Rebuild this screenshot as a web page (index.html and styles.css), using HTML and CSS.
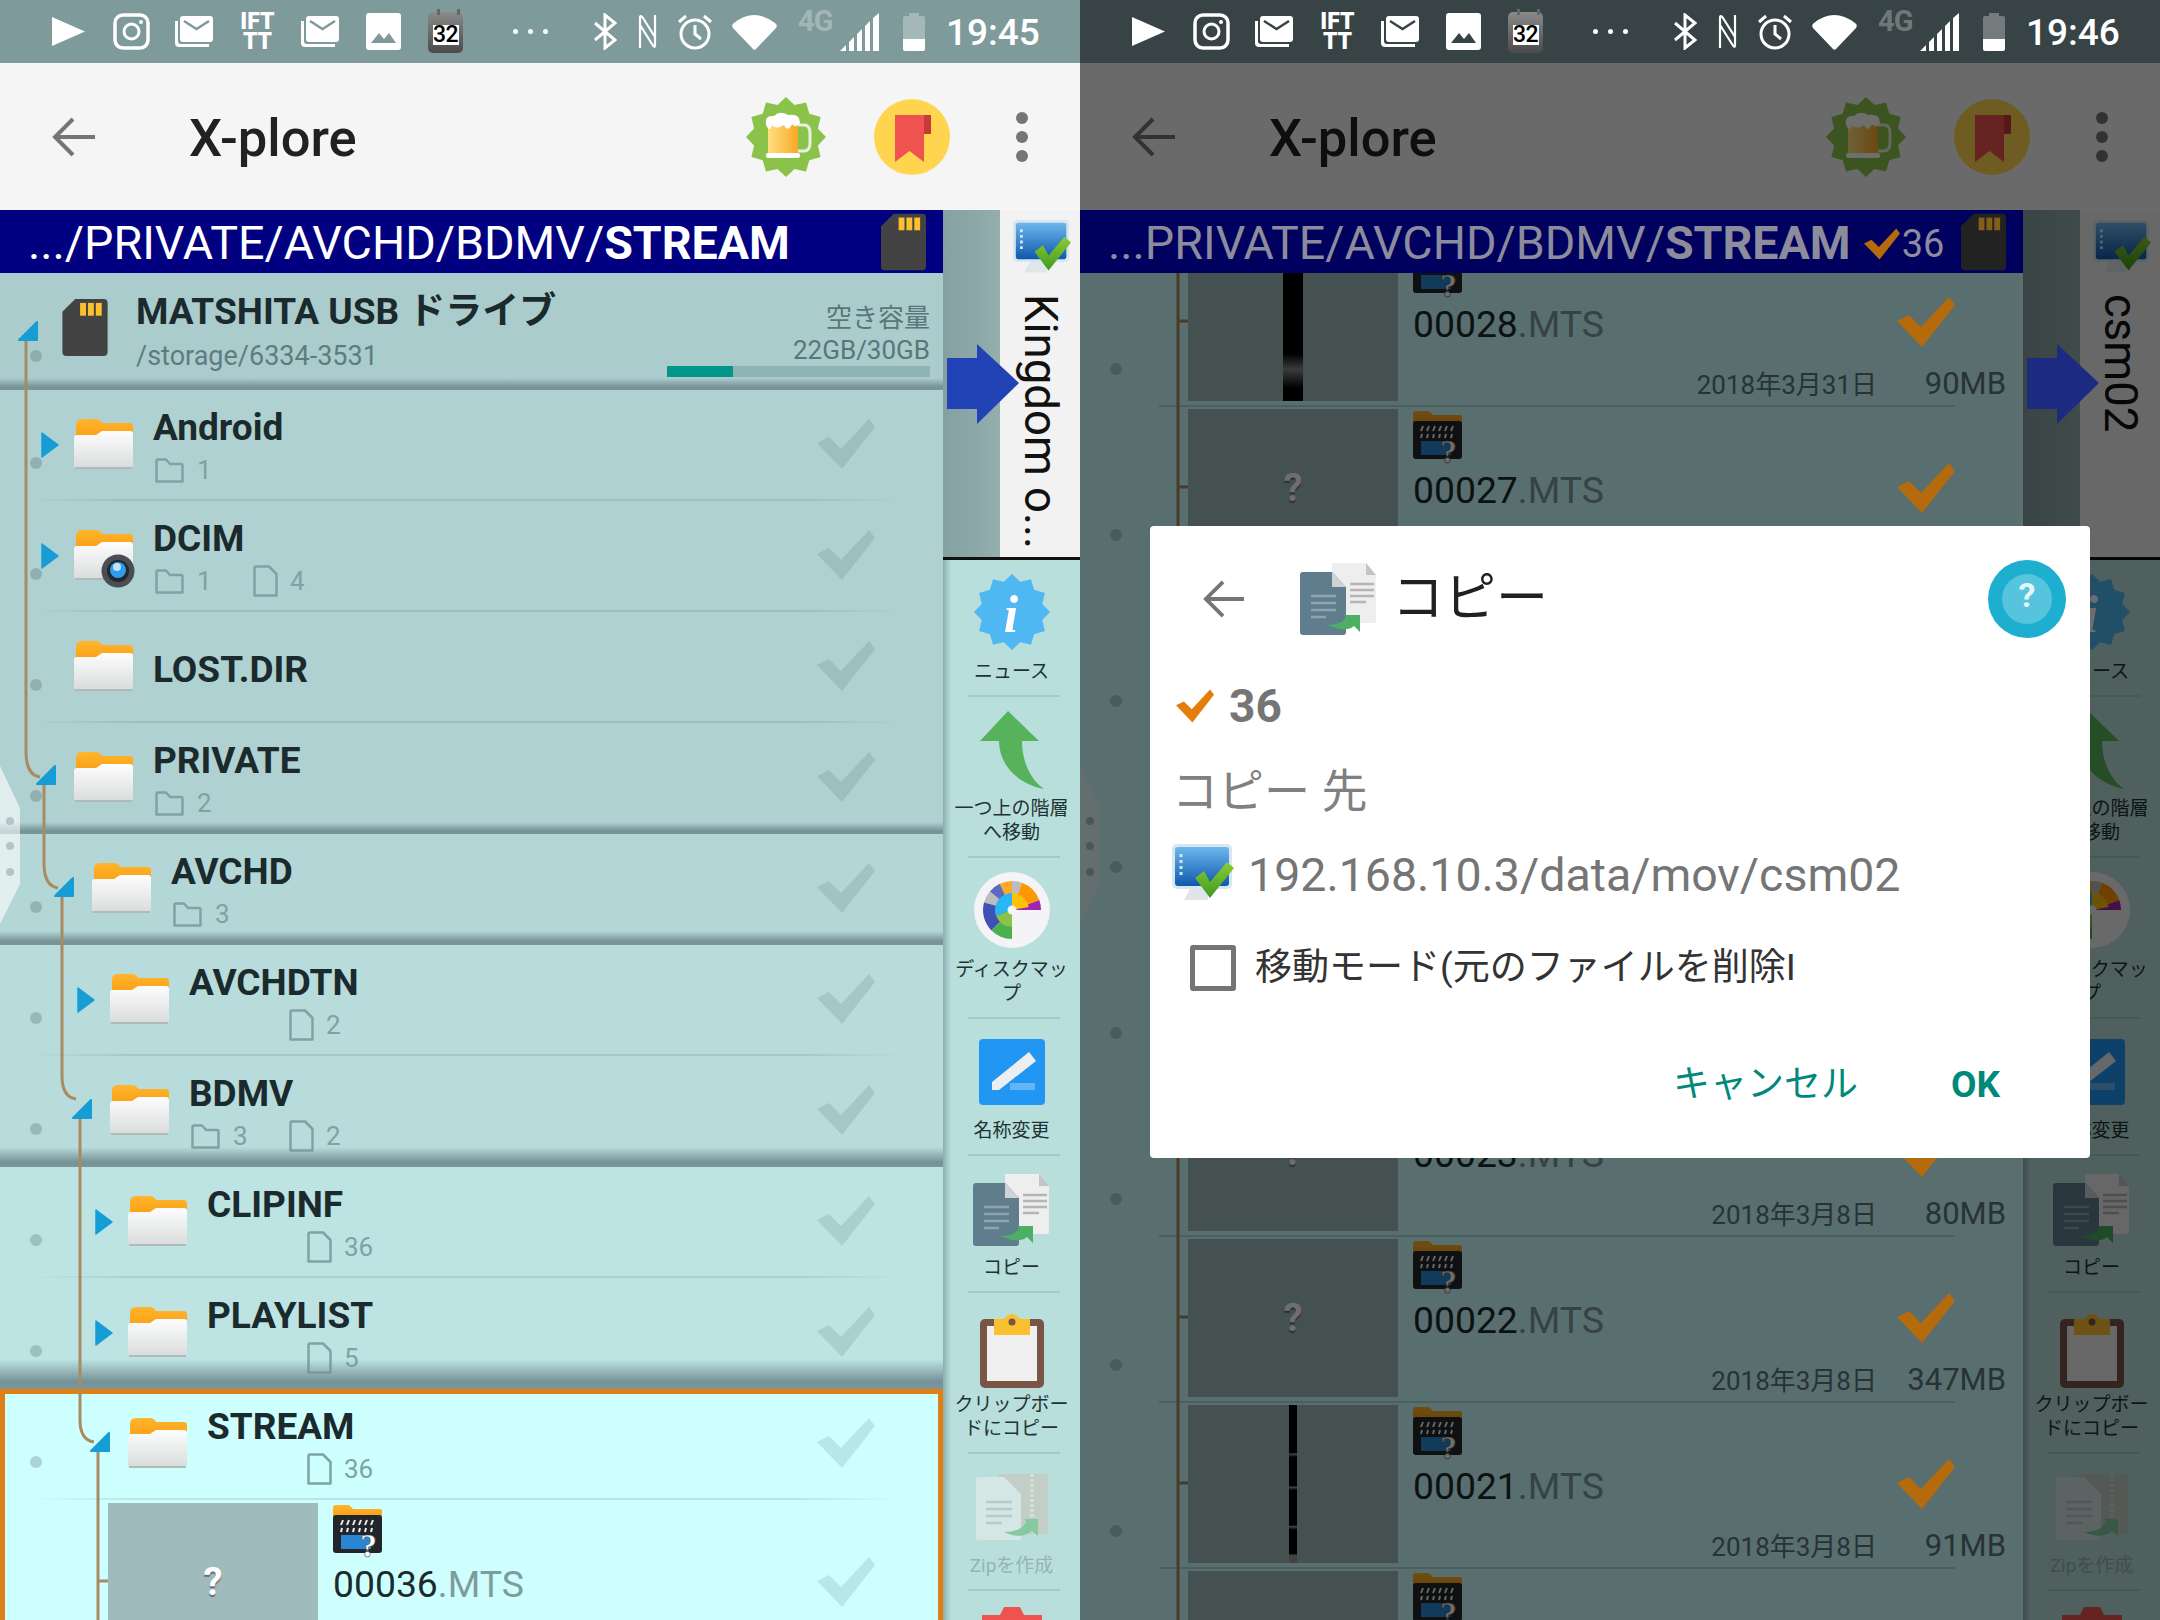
FILE: index.html
```html
<!DOCTYPE html>
<html lang="ja">
<head>
<meta charset="utf-8">
<title>X-plore</title>
<link rel="stylesheet" href="styles.css">
</head>
<body>
<svg class="defs" aria-hidden="true">
  <defs>
    <linearGradient id="gFront" x1="0" y1="0" x2="0" y2="1"><stop offset="0" stop-color="#fdfdfd"/><stop offset="1" stop-color="#d9dbdb"/></linearGradient>
    <linearGradient id="gBack" x1="0" y1="0" x2="0" y2="1"><stop offset="0" stop-color="#ffb52c"/><stop offset="1" stop-color="#f99c14"/></linearGradient>
    <linearGradient id="gScreen" x1="0" y1="0" x2="0" y2="1"><stop offset="0" stop-color="#6db7ee"/><stop offset="1" stop-color="#0f58ad"/></linearGradient>
    <linearGradient id="gBeer" x1="0" y1="0" x2="1" y2="0"><stop offset="0" stop-color="#ffe082"/><stop offset="1" stop-color="#f9a825"/></linearGradient>
    <linearGradient id="gCheck" x1="0" y1="0" x2="0" y2="1"><stop offset="0" stop-color="#8ccb35"/><stop offset="1" stop-color="#3f9a20"/></linearGradient>
    <symbol id="folder" viewBox="0 0 59 50">
      <path d="M2 22V6Q2 0 8 0H22Q26 0 28 4H56Q59 4 59 7V22Z" fill="url(#gBack)"/>
      <path d="M0 19Q0 16 3 16H22L28 12H56Q59 12 59 15V46Q59 50 55 50H4Q0 50 0 46Z" fill="url(#gFront)"/>
      <path d="M1 49H58" stroke="#9fb0b0" stroke-width="1.5"/>
    </symbol>
    <symbol id="cam" viewBox="0 0 34 34">
      <circle cx="17" cy="17" r="16.5" fill="#4a4d52"/>
      <circle cx="17" cy="17" r="11" fill="#23262a"/>
      <circle cx="17" cy="16" r="8" fill="#2f9bea"/>
      <circle cx="16" cy="13" r="4" fill="#bfe3fb"/>
    </symbol>
    <symbol id="mini-folder" viewBox="0 0 29 25">
      <path d="M1.5 23.5V3Q1.5 1.5 3 1.5H11L15 6H26Q27.5 6 27.5 7.5V23.5Z" fill="none" stroke="currentColor" stroke-width="2.5" stroke-linejoin="round"/>
    </symbol>
    <symbol id="mini-file" viewBox="0 0 25 32">
      <path d="M1.5 30.5V3Q1.5 1.5 3 1.5H16L23.5 9V30.5Z" fill="none" stroke="currentColor" stroke-width="2.5" stroke-linejoin="round"/>
    </symbol>
    <symbol id="check" viewBox="0 0 58 50">
      <polygon points="0,24 12,18 24,30 52,0 58,8 25,50" fill="currentColor"/>
    </symbol>
    <symbol id="card" viewBox="0 0 46 58">
      <path d="M13 0H42Q46 0 46 4V54Q46 58 42 58H4Q0 58 0 54V13Z" fill="#434343"/>
      <rect x="18" y="4" width="6" height="13" fill="#fbc02d"/><rect x="26" y="4" width="6" height="13" fill="#fbc02d"/><rect x="34" y="4" width="6" height="13" fill="#fbc02d"/>
    </symbol>
    <symbol id="clapper" viewBox="0 0 49 56">
      <path d="M0 12V3Q0 0 3 0H16L20 4H47Q49 4 49 6V14Z" fill="url(#gBack)"/>
      <rect x="0" y="10" width="49" height="38" rx="3" fill="#22262a"/>
      <path d="M8 20l2-5M14 20l2-5M20 20l2-5M26 20l2-5M32 20l2-5M38 20l2-5M8 27l1-4M14 27l1-4M20 27l1-4M26 27l1-4M32 27l1-4M38 27l1-4" stroke="#eee" stroke-width="2"/>
      <rect x="8" y="30" width="30" height="14" fill="#2a86d4"/>
      <text x="27" y="52" class="clap-q">?</text>
    </symbol>
    <symbol id="monitor" viewBox="0 0 62 62">
      <rect x="0" y="0" width="60" height="45" rx="5" fill="#d6e7f2"/>
      <rect x="3" y="3" width="54" height="39" rx="3" fill="url(#gScreen)"/>
      <path d="M9 10v24" stroke="#cfe6f7" stroke-width="3" stroke-dasharray="3 3"/>
      <path d="M18 45H36V56H12Z" fill="#dfe5e8"/>
      <path d="M23 34L32 27L38 38L55 18L62 24L38 54Z" fill="url(#gCheck)"/>
    </symbol>
    <symbol id="star" viewBox="0 0 80 80">
      <polygon fill="currentColor" points="80,40 71.9,31.5 74.6,20 63.3,16.7 60,5.4 48.5,8.1 40,0 31.5,8.1 20,5.4 16.7,16.7 5.4,20 8.1,31.5 0,40 8.1,48.5 5.4,60 16.7,63.3 20,74.6 31.5,71.9 40,80 48.5,71.9 60,74.6 63.3,63.3 74.6,60 71.9,48.5"/>
    </symbol>
    <symbol id="t-down" viewBox="0 0 20 20"><polygon points="19,1 19,19 1,19" fill="#169dd6" stroke="#169dd6" stroke-width="2" stroke-linejoin="round"/></symbol>
    <symbol id="t-right" viewBox="0 0 18 26"><polygon points="1,1 17,13 1,25" fill="#169dd6" stroke="#169dd6" stroke-width="1.5" stroke-linejoin="round"/></symbol>
    <symbol id="back" viewBox="0 0 44 40"><path d="M43 20H4M21 2L3 20L21 38" fill="none" stroke="currentColor" stroke-width="4"/></symbol>
    <symbol id="copy" viewBox="0 0 78 72">
      <path d="M32 0H66L76 12V58Q76 60 74 60H32Z" fill="#eeeeee"/>
      <path d="M66 0L76 12H66Z" fill="#c4c4c4"/>
      <path d="M50 21H74M50 27H74M50 33H74M50 39H66" stroke="#b5b5b5" stroke-width="2.5"/>
      <path d="M3 9H32L46 24V69Q46 72 43 72H3Q0 72 0 69V12Q0 9 3 9Z" fill="#5f7d8d"/>
      <path d="M32 9L46 24H32Z" fill="#cfd3d5"/>
      <path d="M11 33H36M11 40H36M11 47H36M11 54H26" stroke="#8ea4b0" stroke-width="2.5"/>
      <path d="M27 62Q42 62 46 54L44 52H60V69L54 63Q46 70 27 62Z" fill="#4caf64"/>
    </symbol>
    <symbol id="s-mail" viewBox="0 0 38 31">
      <path d="M0 5V27Q0 31 4 31H34V28H6Q3 28 3 25V5Z" fill="#fff"/>
      <rect x="5" y="0" width="33" height="26" rx="3" fill="#fff"/>
      <path d="M9 5L21.5 13L34 5" fill="none" stroke="currentColor" stroke-width="2.5"/>
    </symbol>
    <symbol id="s-ig" viewBox="0 0 37 37">
      <rect x="2" y="2" width="33" height="33" rx="8" fill="none" stroke="#fff" stroke-width="3.5"/>
      <circle cx="18.5" cy="18.5" r="7.5" fill="none" stroke="#fff" stroke-width="3"/>
      <circle cx="28" cy="9" r="2" fill="#fff"/>
    </symbol>
    <symbol id="s-pic" viewBox="0 0 35 37">
      <rect width="35" height="37" rx="3" fill="#fff"/>
      <path d="M5 30L13 20L18 26L23 20L30 30Z" fill="currentColor"/>
    </symbol>
    <symbol id="s-bt" viewBox="0 0 24 37"><path d="M2 10L22 27L12 35V2L22 10L2 27" fill="none" stroke="#fff" stroke-width="3"/></symbol>
    <symbol id="s-n" viewBox="0 0 21 37"><path d="M3 35V5Q3 1 6 5L18 24M3 12L15 31Q18 36 18 32V2" fill="none" stroke="#fff" stroke-width="2.2"/></symbol>
    <symbol id="s-alarm" viewBox="0 0 36 37">
      <circle cx="18" cy="21" r="14" fill="none" stroke="#fff" stroke-width="3"/>
      <path d="M18 12V21L24 26M2 9L9 3M34 9L27 3" fill="none" stroke="#fff" stroke-width="3"/>
    </symbol>
    <symbol id="s-wifi" viewBox="0 0 45 37"><path d="M1 15Q-1 12 2 10Q22 -6 43 10Q46 12 44 15L24 36Q22.5 37.500 21 36Z" fill="#fff"/></symbol>
    <symbol id="s-sig" viewBox="0 0 39 38">
      <path d="M0 38L6 32V38ZM9 29L14 24V38H9ZM17 21L22 16V38H17ZM25 13L30 8V38H25ZM33 5L39 0V38H33Z" fill="#fff"/>
    </symbol>
    <symbol id="s-bat" viewBox="0 0 22 38">
      <path d="M6 0H16V3H20Q22 3 22 5V26H0V5Q0 3 2 3H6Z" fill="#fff" opacity=".3"/>
      <path d="M0 26H22V36Q22 38 20 38H2Q0 38 0 36Z" fill="#fff"/>
    </symbol>
    <symbol id="beer" viewBox="0 0 80 80">
      <use href="#star" width="80" height="80"/>
      <rect x="22" y="22" width="30" height="36" rx="3" fill="url(#gBeer)"/>
      <path d="M52 28H58Q64 28 64 36V46Q64 54 58 54H52" fill="none" stroke="#e9efe0" stroke-width="3"/>
      <path d="M20 28Q18 18 28 19Q34 13 42 18Q54 16 54 26Q50 32 46 27Q42 36 38 28Q30 33 26 28Q24 36 20 28Z" fill="#fff"/>
      <rect x="20" y="56" width="34" height="5" rx="2" fill="#fff"/>
    </symbol>
    <symbol id="bookmark" viewBox="0 0 76 76">
      <circle cx="38" cy="38" r="38" fill="#ffd54f"/>
      <path d="M21 16H50V63L35.500 52L21 63Z" fill="#ef5350"/>
      <path d="M50 16H57V35H50Z" fill="#c73a3a"/>
    </symbol>
    <symbol id="pie" viewBox="0 0 76 76">
      <circle cx="38" cy="38" r="38" fill="#f4f4f6"/>
      <path d="M38 38L67 38A29 29 0 0 0 65.3 28.1Z" fill="#9c27b0"/>
      <path d="M38 38L65.3 28.1A29 29 0 0 0 47.9 10.7Z" fill="#ff9800"/>
      <path d="M38 38L47.9 10.7A29 29 0 0 0 38 9Z" fill="#bdbdbd"/>
      <path d="M38 38L38 9A29 29 0 0 0 25.7 11.7Z" fill="#ffa726"/>
      <path d="M38 38L25.7 11.7A29 29 0 0 0 15.8 19.4Z" fill="#5c6bc0"/>
      <path d="M38 38L15.8 19.4A29 29 0 0 0 10 30.5Z" fill="#bdbdbd"/>
      <path d="M38 38L10 30.5A29 29 0 0 0 17.5 58.5Z" fill="#3f51b5"/>
      <path d="M38 38L17.5 58.5A29 29 0 0 0 38 67Z" fill="#4caf50"/>
      <path d="M38 38L54.7 35A17 17 0 0 0 38 21Z" fill="#ffc107"/>
      <path d="M38 38L38 21A17 17 0 0 0 22 43.8Z" fill="#29b6f6"/>
      <path d="M38 38L22 43.8A17 17 0 0 0 38 55Z" fill="#8bc34a"/>
      <circle cx="38" cy="38" r="4.5" fill="#f4f4f6"/>
    </symbol>
    <symbol id="up" viewBox="0 0 64 78"><path d="M28 0L59 30H42C42 50 50 68 64 78C35 72 19 52 19 30H0Z" fill="#57b25c"/></symbol>
    <symbol id="rename" viewBox="0 0 66 66">
      <rect width="66" height="66" rx="4" fill="#2196f3"/>
      <polygon points="13,43 50,13 57,22 20,51 13,51" fill="#eceff1"/>
      <rect x="31" y="44" width="25" height="7" fill="#64b5f6"/>
    </symbol>
    <symbol id="clip" viewBox="0 0 64 76">
      <rect x="0" y="7" width="64" height="69" rx="5" fill="#795548"/>
      <rect x="7" y="14" width="50" height="55" fill="#f0f0f0"/>
      <path d="M14 7H24Q32 -3 40 7H50V23H14Z" fill="#fbc02d"/>
      <circle cx="32" cy="10" r="3.5" fill="#795548"/>
    </symbol>
    <symbol id="zip" viewBox="0 0 72 66">
      <rect x="22" y="0" width="50" height="60" rx="3" fill="#c3cdc4"/>
      <path d="M56 0V60" stroke="#d8dfd8" stroke-width="4" stroke-dasharray="3 2"/>
      <path d="M3 3H28L45 20V66H3Q0 66 0 63V6Q0 3 3 3Z" fill="#d8e8e6"/>
      <path d="M10 28H36M10 35H36M10 42H36M10 49H26" stroke="#b7c9c7" stroke-width="2.5"/>
      <path d="M28 58Q45 58 50 48L48 45H62V62L56 57Q46 66 28 58Z" fill="#7fc79a"/>
    </symbol>
    <symbol id="trash" viewBox="0 0 60 60">
      <path d="M0 8H18L22 0H38L42 8H60V60H0Z" fill="#ef5350"/>
    </symbol>
    <symbol id="handle" viewBox="0 0 20 158">
      <polygon points="0,0 20,42 20,118 0,158" fill="#fff" opacity=".6"/>
      <circle cx="10" cy="55" r="4" fill="#b3c5c5"/><circle cx="10" cy="80" r="4" fill="#b3c5c5"/><circle cx="10" cy="106" r="4" fill="#b3c5c5"/>
    </symbol>
    <symbol id="go" viewBox="0 0 72 80">
      <path d="M0 14H30V0L72 39L30 80V65H0Z" fill="currentColor"/>
    </symbol>
  </defs>
</svg>

<main class="screen">

<section class="phone">
  <header class="status">
    <svg class="i-play" viewBox="0 0 33 29"><polygon points="0,0 33,14.5 0,29" fill="#fff"/></svg>
    <svg class="i-ig"><use href="#s-ig"/></svg>
    <svg class="i-mail"><use href="#s-mail"/></svg>
    <span class="i-ifttt">IFT<br>TT</span>
    <svg class="i-mail2"><use href="#s-mail"/></svg>
    <svg class="i-pic"><use href="#s-pic"/></svg>
    <span class="i-cal"><span>32</span></span>
    <span class="i-dots"><i></i><i></i><i></i></span>
    <svg class="i-bt"><use href="#s-bt"/></svg>
    <svg class="i-n"><use href="#s-n"/></svg>
    <svg class="i-alarm"><use href="#s-alarm"/></svg>
    <svg class="i-wifi"><use href="#s-wifi"/></svg>
    <span class="i-4g">4G</span>
    <svg class="i-sig"><use href="#s-sig"/></svg>
    <svg class="i-bat"><use href="#s-bat"/></svg>
    <time class="clock">19:45</time>
  </header>
  <header class="appbar">
    <svg class="bar-back"><use href="#back"/></svg>
    <h1 class="app-title">X-plore</h1>
    <svg class="bar-beer"><use href="#beer"/></svg>
    <svg class="bar-mark"><use href="#bookmark"/></svg>
    <span class="bar-menu"><i></i><i></i><i></i></span>
  </header>
  <div class="main">
    <div class="pane">
      <div class="path">
        <span class="path-text">.../PRIVATE/AVCHD/BDMV/<b>STREAM</b></span>
        <svg class="path-card"><use href="#card"/></svg>
      </div>
      <div class="list">
        <div class="drive band b12">
          <i class="dot"></i>
          <svg class="drive-icon"><use href="#card"/></svg>
          <div class="drive-text">
            <div class="drive-name">MATSHITA USB ドライブ</div>
            <div class="drive-path">/storage/6334-3531</div>
          </div>
          <div class="drive-free">
            <div>空き容量</div>
            <div>22GB/30GB</div>
            <div class="meter"><span class="meter-fill"></span></div>
          </div>
        </div>
        <div class="row t0 sep l0"><i class="dot"></i><svg class="fld"><use href="#folder"/></svg>
          <div class="txt"><div class="nm">Android</div><div class="sub"><span class="slot"><svg class="mf"><use href="#mini-folder"/></svg>1</span></div></div>
          <svg class="chk"><use href="#check"/></svg></div>
        <div class="row t0 sep l0"><i class="dot"></i><span class="fld-wrap"><svg class="fld"><use href="#folder"/></svg><svg class="cam"><use href="#cam"/></svg></span>
          <div class="txt"><div class="nm">DCIM</div><div class="sub"><span class="slot"><svg class="mf"><use href="#mini-folder"/></svg>1</span><span class="slot"><svg class="mfl"><use href="#mini-file"/></svg>4</span></div></div>
          <svg class="chk"><use href="#check"/></svg></div>
        <div class="row t0 sep l0"><i class="dot"></i><svg class="fld"><use href="#folder"/></svg>
          <div class="txt"><div class="nm">LOST.DIR</div></div>
          <svg class="chk"><use href="#check"/></svg></div>
        <div class="row t0 band b12 l0"><i class="dot"></i><svg class="fld"><use href="#folder"/></svg>
          <div class="txt"><div class="nm">PRIVATE</div><div class="sub"><span class="slot"><svg class="mf"><use href="#mini-folder"/></svg>2</span></div></div>
          <svg class="chk"><use href="#check"/></svg></div>
        <div class="row t1 band b14 l1"><i class="dot"></i><svg class="fld"><use href="#folder"/></svg>
          <div class="txt"><div class="nm">AVCHD</div><div class="sub"><span class="slot"><svg class="mf"><use href="#mini-folder"/></svg>3</span></div></div>
          <svg class="chk"><use href="#check"/></svg></div>
        <div class="row t2 sep l2"><i class="dot"></i><svg class="fld"><use href="#folder"/></svg>
          <div class="txt"><div class="nm">AVCHDTN</div><div class="sub"><span class="slot"></span><span class="slot"><svg class="mfl"><use href="#mini-file"/></svg>2</span></div></div>
          <svg class="chk"><use href="#check"/></svg></div>
        <div class="row t2 band b20 l2"><i class="dot"></i><svg class="fld"><use href="#folder"/></svg>
          <div class="txt"><div class="nm">BDMV</div><div class="sub"><span class="slot"><svg class="mf"><use href="#mini-folder"/></svg>3</span><span class="slot"><svg class="mfl"><use href="#mini-file"/></svg>2</span></div></div>
          <svg class="chk"><use href="#check"/></svg></div>
        <div class="row t3 sep l3"><i class="dot"></i><svg class="fld"><use href="#folder"/></svg>
          <div class="txt"><div class="nm">CLIPINF</div><div class="sub"><span class="slot"></span><span class="slot"><svg class="mfl"><use href="#mini-file"/></svg>36</span></div></div>
          <svg class="chk"><use href="#check"/></svg></div>
        <div class="row t3 band b30 l3"><i class="dot"></i><svg class="fld"><use href="#folder"/></svg>
          <div class="txt"><div class="nm">PLAYLIST</div><div class="sub"><span class="slot"></span><span class="slot"><svg class="mfl"><use href="#mini-file"/></svg>5</span></div></div>
          <svg class="chk"><use href="#check"/></svg></div>
        <div class="selected">
          <div class="row t4 sep l3"><i class="dot"></i><svg class="fld"><use href="#folder"/></svg>
            <div class="txt"><div class="nm">STREAM</div><div class="sub"><span class="slot"></span><span class="slot"><svg class="mfl"><use href="#mini-file"/></svg>36</span></div></div>
            <svg class="chk"><use href="#check"/></svg></div>
          <div class="file first">
            <div class="thumb"><span class="q">?</span></div>
            <div class="file-body">
              <div class="file-top">
                <div><svg class="clap"><use href="#clapper"/></svg><div class="fname">00036<span class="ext">.MTS</span></div></div>
                <svg class="chk fchk"><use href="#check"/></svg>
              </div>
            </div>
          </div>
        </div>
        <svg class="tree" viewBox="0 273 943 1347">
          <path d="M26 340V752Q26 775 40 777M44 785V863Q44 886 58 888M62 897V1076Q62 1097 76 1099M80 1119V1420Q80 1440 94 1442M98 1452V1620M98 1581H108" fill="none" stroke="#a88b60" stroke-width="3"/>
          <use href="#t-down" x="18" y="321" width="20" height="20"/>
          <use href="#t-down" x="36" y="765" width="20" height="20"/>
          <use href="#t-down" x="54" y="877" width="20" height="20"/>
          <use href="#t-down" x="72" y="1099" width="20" height="20"/>
          <use href="#t-down" x="90" y="1432" width="20" height="20"/>
          <use href="#t-right" x="41" y="432" width="18" height="26"/>
          <use href="#t-right" x="41" y="543" width="18" height="26"/>
          <use href="#t-right" x="77" y="987" width="18" height="26"/>
          <use href="#t-right" x="95" y="1209" width="18" height="26"/>
          <use href="#t-right" x="95" y="1320" width="18" height="26"/>
        </svg>
        <svg class="edge"><use href="#handle"/></svg>
      </div>
    </div>
    <aside class="side">
      <div class="tabbar">
        <div class="tab-gap"></div>
        <div class="tab-card">
          <svg class="tab-mon"><use href="#monitor"/></svg>
          <div class="tab-name"><span>Kingdom o...</span></div>
        </div>
      </div>
      <nav class="tools">
        <div class="tool"><svg class="ti news"><use href="#star"/><text x="38" y="58" class="news-i">i</text></svg><div class="lb">ニュース</div></div>
        <div class="tool"><svg class="ti"><use href="#up" x="7" y="0" width="64" height="78"/></svg><div class="lb">一つ上の階層<br>へ移動</div></div>
        <div class="tool"><svg class="ti"><use href="#pie" x="1" width="76" height="76"/></svg><div class="lb">ディスクマッ<br>プ</div></div>
        <div class="tool"><svg class="ti"><use href="#rename" x="6" y="6" width="66" height="66"/></svg><div class="lb">名称変更</div></div>
        <div class="tool"><svg class="ti"><use href="#copy" x="0" y="4" width="78" height="72"/></svg><div class="lb">コピー</div></div>
        <div class="tool"><svg class="ti"><use href="#clip" x="7" y="5" width="64" height="76"/></svg><div class="lb">クリップボー<br>ドにコピー</div></div>
        <div class="tool off"><svg class="ti"><use href="#zip" x="3" y="6" width="72" height="66"/></svg><div class="lb">Zipを作成</div></div>
        <div class="tool"><svg class="ti"><use href="#trash" x="9" y="2" width="60" height="60"/></svg></div>
      </nav>
    </aside>
    <svg class="go"><use href="#go"/></svg>
  </div>
</section>

<section class="phone dimmed">
  <header class="status">
    <svg class="i-play" viewBox="0 0 33 29"><polygon points="0,0 33,14.5 0,29" fill="#fff"/></svg>
    <svg class="i-ig"><use href="#s-ig"/></svg>
    <svg class="i-mail"><use href="#s-mail"/></svg>
    <span class="i-ifttt">IFT<br>TT</span>
    <svg class="i-mail2"><use href="#s-mail"/></svg>
    <svg class="i-pic"><use href="#s-pic"/></svg>
    <span class="i-cal"><span>32</span></span>
    <span class="i-dots"><i></i><i></i><i></i></span>
    <svg class="i-bt"><use href="#s-bt"/></svg>
    <svg class="i-n"><use href="#s-n"/></svg>
    <svg class="i-alarm"><use href="#s-alarm"/></svg>
    <svg class="i-wifi"><use href="#s-wifi"/></svg>
    <span class="i-4g">4G</span>
    <svg class="i-sig"><use href="#s-sig"/></svg>
    <svg class="i-bat"><use href="#s-bat"/></svg>
    <time class="clock">19:46</time>
  </header>
  <header class="appbar">
    <svg class="bar-back"><use href="#back"/></svg>
    <h1 class="app-title">X-plore</h1>
    <svg class="bar-beer"><use href="#beer"/></svg>
    <svg class="bar-mark"><use href="#bookmark"/></svg>
    <span class="bar-menu"><i></i><i></i><i></i></span>
  </header>
  <div class="main">
    <div class="pane">
      <div class="path">
        <span class="path-text">...PRIVATE/AVCHD/BDMV/<b>STREAM</b></span>
        <svg class="path-chk"><use href="#check"/></svg><span class="path-count">36</span>
        <svg class="path-card"><use href="#card"/></svg>
      </div>
      <div class="list t4">
        <div class="scrolled">
          <div class="file"><i class="dot"></i><div class="thumb"><span class="bar bar-a"></span></div>
            <div class="file-body"><div class="file-top"><div><svg class="clap"><use href="#clapper"/></svg><div class="fname">00028<span class="ext">.MTS</span></div></div><svg class="chk fchk on"><use href="#check"/></svg></div>
            <div class="meta"><span class="date">2018年3月31日</span><span class="size">90MB</span></div></div></div>
          <div class="file"><i class="dot"></i><div class="thumb"><span class="q">?</span></div>
            <div class="file-body"><div class="file-top"><div><svg class="clap"><use href="#clapper"/></svg><div class="fname">00027<span class="ext">.MTS</span></div></div><svg class="chk fchk on"><use href="#check"/></svg></div></div></div>
          <div class="file"><i class="dot"></i><div class="thumb"></div><div class="file-body"></div></div>
          <div class="file"><i class="dot"></i><div class="thumb"></div><div class="file-body"></div></div>
          <div class="file"><i class="dot"></i><div class="thumb"></div><div class="file-body"></div></div>
          <div class="file"><i class="dot"></i><div class="thumb"><span class="q">?</span></div>
            <div class="file-body"><div class="file-top"><div><svg class="clap"><use href="#clapper"/></svg><div class="fname">00023<span class="ext">.MTS</span></div></div><svg class="chk fchk on"><use href="#check"/></svg></div>
            <div class="meta"><span class="date">2018年3月8日</span><span class="size">80MB</span></div></div></div>
          <div class="file"><i class="dot"></i><div class="thumb"><span class="q">?</span></div>
            <div class="file-body"><div class="file-top"><div><svg class="clap"><use href="#clapper"/></svg><div class="fname">00022<span class="ext">.MTS</span></div></div><svg class="chk fchk on"><use href="#check"/></svg></div>
            <div class="meta"><span class="date">2018年3月8日</span><span class="size">347MB</span></div></div></div>
          <div class="file"><i class="dot"></i><div class="thumb"><span class="bar bar-b"></span></div>
            <div class="file-body"><div class="file-top"><div><svg class="clap"><use href="#clapper"/></svg><div class="fname">00021<span class="ext">.MTS</span></div></div><svg class="chk fchk on"><use href="#check"/></svg></div>
            <div class="meta"><span class="date">2018年3月8日</span><span class="size">91MB</span></div></div></div>
          <div class="file"><i class="dot"></i><div class="thumb"></div>
            <div class="file-body"><div class="file-top"><div><svg class="clap"><use href="#clapper"/></svg></div></div></div></div>
        </div>
        <svg class="tree" viewBox="0 273 943 1347">
          <path d="M98 273V1620M98 321H108M98 487H108M98 653H108M98 819H108M98 985H108M98 1151H108M98 1317H108M98 1483H108" fill="none" stroke="#a88b60" stroke-width="3"/>
        </svg>
        <svg class="edge"><use href="#handle"/></svg>
      </div>
    </div>
    <aside class="side">
      <div class="tabbar">
        <div class="tab-gap"></div>
        <div class="tab-card">
          <svg class="tab-mon"><use href="#monitor"/></svg>
          <div class="tab-name"><span>csm02</span></div>
        </div>
      </div>
      <nav class="tools">
        <div class="tool"><svg class="ti news"><use href="#star"/><text x="38" y="58" class="news-i">i</text></svg><div class="lb">ニュース</div></div>
        <div class="tool"><svg class="ti"><use href="#up" x="7" y="0" width="64" height="78"/></svg><div class="lb">一つ上の階層<br>へ移動</div></div>
        <div class="tool"><svg class="ti"><use href="#pie" x="1" width="76" height="76"/></svg><div class="lb">ディスクマッ<br>プ</div></div>
        <div class="tool"><svg class="ti"><use href="#rename" x="6" y="6" width="66" height="66"/></svg><div class="lb">名称変更</div></div>
        <div class="tool"><svg class="ti"><use href="#copy" x="0" y="4" width="78" height="72"/></svg><div class="lb">コピー</div></div>
        <div class="tool"><svg class="ti"><use href="#clip" x="7" y="5" width="64" height="76"/></svg><div class="lb">クリップボー<br>ドにコピー</div></div>
        <div class="tool off"><svg class="ti"><use href="#zip" x="3" y="6" width="72" height="66"/></svg><div class="lb">Zipを作成</div></div>
        <div class="tool"><svg class="ti"><use href="#trash" x="9" y="2" width="60" height="60"/></svg></div>
      </nav>
    </aside>
    <svg class="go"><use href="#go"/></svg>
  </div>
  <div class="scrim"></div>
  <div class="dialog">
    <div class="dlg-head">
      <svg class="dlg-back"><use href="#back"/></svg>
      <svg class="dlg-icon"><use href="#copy"/></svg>
      <h2 class="dlg-title">コピー</h2>
      <span class="dlg-help"><span>?</span></span>
    </div>
    <div class="dlg-count"><svg class="dlg-chk"><use href="#check"/></svg><b>36</b></div>
    <div class="dlg-label">コピー 先</div>
    <div class="dlg-path"><svg class="dlg-mon"><use href="#monitor"/></svg><span>192.168.10.3/data/mov/csm02</span></div>
    <div class="dlg-move"><span class="box"></span><span class="move-text">移動モード(元のファイルを削除I</span></div>
    <div class="dlg-actions"><span class="btn">キャンセル</span><span class="btn strong">OK</span></div>
  </div>
</section>
</main>
</body>
</html>
```
FILE: styles.css
```css
* { box-sizing: border-box; }
html, body { margin: 0; padding: 0; background: #000; }
body { font-family: Roboto, "Noto Sans CJK JP", sans-serif; color: #1b2a2c; }
.defs { position: absolute; width: 0; height: 0; }
.screen { display: flex; width: 2160px; height: 1620px; overflow: hidden; }
.phone { position: relative; width: 1080px; height: 1620px; overflow: hidden; flex: none; }

/* status bar */
.status { display: flex; align-items: center; height: 63px; padding-left: 52px; background: #7f9a9a; color: #7f9a9a; }
.dimmed .status { background: #374344; color: #374344; }
.status svg { flex: none; display: block; }
.i-play { width: 33px; height: 29px; margin-right: 28px; }
.i-ig { width: 37px; height: 37px; margin-right: 25px; }
.i-mail { width: 38px; height: 31px; margin-right: 27px; }
.i-mail2 { width: 38px; height: 31px; margin-right: 27px; }
.i-pic { width: 35px; height: 37px; margin-right: 27px; }
.i-ifttt { width: 35px; margin-right: 26px; color: #fff; font-weight: 900; font-size: 23px; line-height: 20px; text-align: center; white-space: nowrap; }
.i-cal { position: relative; display: flex; align-items: flex-end; justify-content: center; width: 35px; height: 41px; margin: 2px 50px 0 0; padding-bottom: 8px; background: linear-gradient(#8a8a8a, #4a4a4a); border-radius: 5px; }
.i-cal::before { content: ""; position: absolute; left: 9px; top: -3px; width: 17px; height: 6px; border-left: 3px solid #666; border-right: 3px solid #666; }
.i-cal span { display: block; width: 26px; height: 20px; background: #fff; color: #000; font-size: 23px; line-height: 20px; text-align: center; font-weight: 500; letter-spacing: -.5px; }
.i-dots { display: flex; gap: 10px; width: 35px; margin-right: 45px; }
.i-dots i { flex: none; width: 5px; height: 5px; border-radius: 50%; background: #fff; }
.i-bt { width: 24px; height: 37px; margin-right: 20px; }
.i-n { width: 21px; height: 37px; margin-right: 19px; }
.i-alarm { width: 36px; height: 37px; margin-right: 19px; }
.i-wifi { width: 45px; height: 37px; margin-right: 21px; }
.i-4g { width: 33px; margin-right: 9px; margin-top: -21px; font-weight: 700; font-size: 29px; line-height: 1; letter-spacing: -1px; color: rgba(255,255,255,.3); white-space: nowrap; }
.i-sig { width: 39px; height: 38px; margin-right: 24px; }
.i-bat { width: 22px; height: 38px; margin-right: 21px; }
.clock { font-size: 37px; font-weight: 500; line-height: 1; color: #fff; margin-top: 2px; }

/* app bar */
.appbar { display: flex; align-items: center; height: 147px; padding-left: 52px; background: #f5f5f5; }
.bar-back { width: 44px; height: 40px; margin-right: 93px; color: #757575; flex: none; }
.app-title { flex: 1; margin: 3px 0 0; font-size: 52.5px; font-weight: 500; color: #212121; line-height: 1; }
.bar-beer { width: 80px; height: 80px; color: #8bc34a; margin-right: 48px; flex: none; }
.bar-mark { width: 76px; height: 76px; margin-right: 66px; flex: none; }
.bar-menu { display: flex; flex-direction: column; gap: 7px; width: 12px; margin-right: 52px; flex: none; }
.bar-menu i { width: 12px; height: 12px; border-radius: 50%; background: #757575; }

/* main split */
.main { position: relative; display: flex; height: 1410px; }
.pane { width: 943px; height: 1410px; flex: none; display: flex; flex-direction: column; }
.path { display: flex; align-items: center; flex: none; height: 63px; padding: 4px 0 0 28px; background: #000080; color: #fff; }
.dimmed .path { position: relative; z-index: 2; background: #00005e; color: #8c8c9c; }
.dimmed .path-card { filter: brightness(.5); }
.path-text { font-size: 46.6px; line-height: 1; white-space: nowrap; }
.path-text b { font-weight: 700; }
.path-card { width: 45px; height: 58px; margin: -4px 17px 0 auto; flex: none; }
.path-chk { width: 36px; height: 38px; margin-left: 13px; color: #b56a0c; flex: none; }
.path-count { margin-left: 2px; font-size: 38px; }
.list { position: relative; flex: 1; overflow: hidden; background: #afd1d1; }

/* tree rows */
.dot { position: absolute; left: 30px; width: 12px; height: 12px; border-radius: 50%; background: rgba(60,80,85,.25); }
.drive { position: relative; display: flex; height: 117px; padding: 0 13px 8px 62px; align-items: center; background: #abcccd; }
.drive .dot { top: 77px; }
.drive-icon { width: 46px; height: 57px; margin-right: 28px; flex: none; }
.drive-text { flex: 1; padding-top: 10px; }
.drive-name { font-size: 37px; font-weight: 700; line-height: 42px; white-space: nowrap; }
.drive-path { font-size: 27px; line-height: 36px; color: #5e7c80; margin-top: 5px; }
.drive-free { width: 263px; font-size: 26px; line-height: 32px; color: #597679; text-align: right; padding-top: 24px; }
.meter { display: block; height: 11px; margin-top: 0; background: #8fb3b3; }
.meter-fill { display: block; width: 66px; height: 11px; background: #009688; }

.row { position: relative; display: flex; align-items: center; height: 111px; padding-right: 68px; }
.row .dot { top: 67px; }
.t0 { background: #afd1d1; }
.t1 { background: #b3d6d6; }
.t2 { background: #b7dcdb; }
.t3 { background: #bde4e3; }
.t4 { background: #ceffff; }
.l0 { padding-left: 74px; }
.l1 { padding-left: 92px; }
.l2 { padding-left: 110px; }
.l3 { padding-left: 128px; }
.fld { width: 59px; height: 50px; margin-right: 20px; margin-top: -4px; flex: none; display: block; }
.fld-wrap { position: relative; display: block; flex: none; width: 79px; margin-top: -4px; }
.fld-wrap .fld { margin-top: 0; }
.cam { position: absolute; left: 27px; top: 24px; width: 34px; height: 34px; }
.txt { flex: 1; padding-top: 4px; }
.nm { font-size: 37px; font-weight: 700; line-height: 42px; }
.sub { display: flex; height: 36px; margin-top: 3px; color: #7fa2a4; font-size: 26px; line-height: 36px; }
.slot { display: flex; align-items: center; width: 100px; flex: none; }
.mf { width: 29px; height: 25px; margin: 0 13px 0 2px; }
.mfl { width: 25px; height: 32px; margin-right: 12px; }
.chk { width: 58px; height: 50px; flex: none; margin-top: -3px; color: rgba(40,70,75,.13); }
.sep::after { content: ""; position: absolute; left: 30px; right: 40px; bottom: 0; height: 2px; background: linear-gradient(90deg, transparent, rgba(50,80,85,.14) 12%, rgba(50,80,85,.14) 88%, transparent); }
.band::after { content: ""; position: absolute; left: 0; right: 0; bottom: 0; background: linear-gradient(rgba(100,128,130,0), #76929a 75%, #7b9698); }
.b12::after { height: 12px; }
.b14::after { height: 14px; }
.b20::after { height: 20px; }
.b30::after { height: 30px; }
.selected { position: relative; min-height: 300px; background: #ceffff; }
.selected::after { content: ""; position: absolute; inset: 0; border: 5px solid #e07f14; pointer-events: none; }
.tree { position: absolute; left: 0; top: 0; width: 943px; height: 1347px; pointer-events: none; }
.edge { position: absolute; left: 0; top: 493px; width: 20px; height: 158px; }
.dimmed .list { box-shadow: inset -3px 0 rgba(255,255,255,.3); }

/* file rows */
.scrolled { margin-top: -30px; }
.file { position: relative; display: flex; height: 166px; padding-left: 108px; }
.file::after { content: ""; position: absolute; left: 79px; right: 68px; top: 162px; height: 2px; background: rgba(50,80,85,.2); }
.file.first { margin-top: 3px; }
.file.first::after { display: none; }
.file .dot { top: 120px; }
.thumb { display: flex; align-items: center; justify-content: center; width: 210px; height: 158px; background: #a0bbbb; flex: none; }
.q { color: #fff; font-size: 38px; font-weight: 700; line-height: 1; text-shadow: 0 2px 1px #667; }
.bar { display: block; height: 158px; }
.bar-a { width: 20px; background: linear-gradient(#000 70%, #8a8a8a 80%, #000 92%); }
.bar-b { width: 8px; background: linear-gradient(#000 30%, #999 31%, #000 33%, #000 51%, #999 52%, #000 54%, #000 76%, #999 77%, #000 79%, #000 94%, #999 95%); }
.file-body { flex: 1; padding: 0 17px 0 15px; }
.file-top { display: flex; justify-content: space-between; height: 101px; }
.clap { display: block; width: 49px; height: 56px; margin-top: 2px; }
.clap-q { font: 700 34px "Liberation Serif", serif; fill: #fff; stroke: #555; stroke-width: .6px; }
.fname { font-size: 37.300px; line-height: 44px; margin-top: 1px; white-space: nowrap; }
.ext { color: #7e9b9d; }
.fchk { margin: 54px 51px 0 0; }
.fchk.on { position: relative; z-index: 2; color: #b56a0c; }
.meta { display: flex; justify-content: flex-end; align-items: baseline; margin-top: 20px; color: #5a7779; line-height: 40px; }
.date { font-size: 26px; }
.size { width: 129px; font-size: 31px; text-align: right; }

/* side panel */
.side { width: 137px; flex: none; display: flex; flex-direction: column; height: 1410px; }
.tabbar { display: flex; height: 350px; flex: none; border-bottom: 3px solid #111; }
.tab-gap { width: 57px; background: linear-gradient(90deg, #84a0a0, #94aeae); }
.tab-card { flex: 1; display: flex; flex-direction: column; padding: 10px 0 0 12px; background: #f2f2f2; overflow: hidden; }
.tab-mon { width: 60px; height: 58px; flex: none; }
.tab-name { width: 60px; margin: 16px 0 0 -2px; writing-mode: vertical-rl; color: #111; font-size: 45.5px; line-height: 60px; white-space: nowrap; }
.tools { flex: 1; overflow: hidden; background: linear-gradient(90deg, #8cb0b0, #b9dfdc 8px); }
.tool { position: relative; padding: 14px 0 13px; text-align: center; }
.tool::after { content: ""; position: absolute; left: 25px; right: 20px; bottom: 0; height: 2px; background: rgba(50,80,85,.15); }
.ti { display: block; width: 78px; height: 76px; margin: 0 auto 10px; overflow: visible; }
.news { color: #4fb8f2; }
.news-i { font: italic 700 52px "Liberation Serif", serif; fill: #fff; text-anchor: middle; }
.lb { font-size: 19px; line-height: 24px; color: #1f3335; white-space: nowrap; }
.off .ti { opacity: .9; }
.off .lb { color: #94b4b5; }
.go { position: absolute; left: 947px; top: 134px; width: 72px; height: 80px; color: #2243b6; }
.dimmed .go { z-index: 2; color: #1c2b80; }

/* dialog */
.scrim { position: absolute; left: 0; right: 0; top: 63px; bottom: 0; background: rgba(0,0,0,.57); z-index: 1; }
.dialog { position: absolute; left: 70px; top: 526px; z-index: 3; width: 940px; height: 632px; padding: 34px 0 0 22px; background: #fff; border-radius: 4px; color: #212121; }
.dlg-head { display: flex; align-items: center; height: 78px; padding-right: 24px; }
.dlg-back { width: 42px; height: 40px; margin: 0 55px 0 31px; color: #757575; flex: none; }
.dlg-icon { width: 78px; height: 72px; margin-right: 14px; flex: none; }
.dlg-title { flex: 1; margin: 0; font-size: 52px; font-weight: 400; line-height: 1; }
.dlg-help { display: flex; align-items: center; justify-content: center; width: 78px; height: 78px; border-radius: 50%; background: #1eafd0; flex: none; }
.dlg-help span { display: block; width: 50px; height: 50px; border-radius: 50%; background: #55c4dc; color: #e4f6fa; font-size: 34px; font-weight: 700; line-height: 42px; text-align: center; }
.dlg-count { display: flex; align-items: center; height: 60px; margin: 38px 0 0 4px; color: #757575; }
.dlg-chk { width: 38px; height: 34px; margin-right: 15px; color: #e57d0b; }
.dlg-count b { font-size: 46px; font-weight: 700; }
.dlg-label { height: 60px; margin: 25px 0 0 0; font-size: 46px; line-height: 60px; color: #808080; }
.dlg-path { display: flex; align-items: center; height: 60px; margin-top: 24px; font-size: 46.5px; color: #757575; }
.dlg-mon { width: 62px; height: 62px; margin-right: 14px; flex: none; }
.dlg-move { display: flex; align-items: center; height: 60px; margin: 33px 0 0 18px; font-size: 37px; color: #333; }
.move-text { margin-top: -8px; }
.box { width: 46px; height: 46px; margin-right: 19px; border: 5px solid #757575; border-radius: 3px; flex: none; }
.dlg-actions { display: flex; justify-content: flex-end; gap: 93px; height: 60px; margin-top: 57px; padding-right: 90px; font-size: 37px; line-height: 60px; color: #00897b; }
.strong { font-weight: 700; }
```
